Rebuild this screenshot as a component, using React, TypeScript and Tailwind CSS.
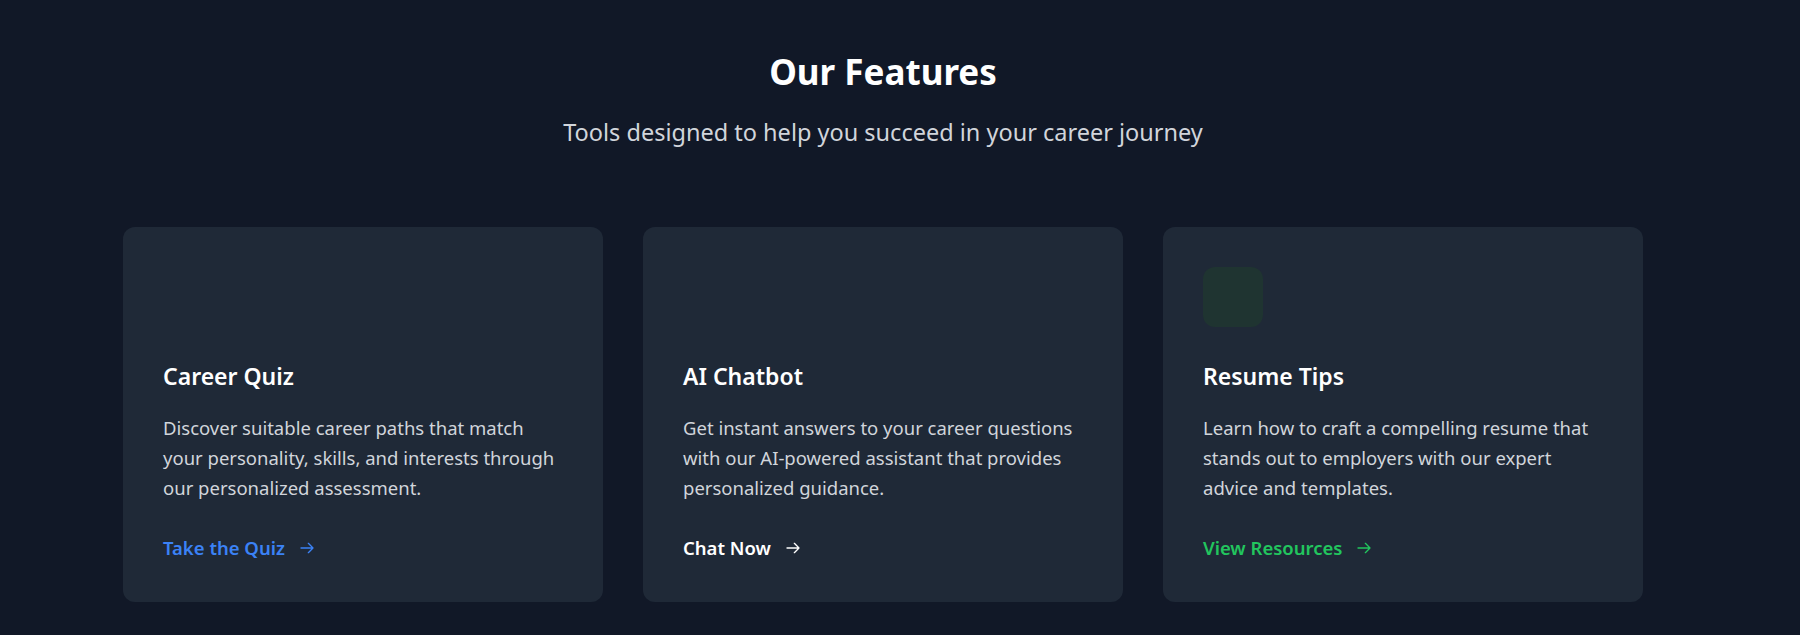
import { ReactNode } from "react";

type Feature = {
    title: string;
    text: string;
    link: string;
    linkClass: string;
    iconClass: string;
};

const features: Feature[] = [
    {
        title: "Career Quiz",
        text: "Discover suitable career paths that match your personality, skills, and interests through our personalized assessment.",
        link: "Take the Quiz",
        linkClass: "text-[#3b82f6]",
        iconClass: "bg-transparent",
    },
    {
        title: "AI Chatbot",
        text: "Get instant answers to your career questions with our AI-powered assistant that provides personalized guidance.",
        link: "Chat Now",
        linkClass: "text-white",
        iconClass: "bg-transparent",
    },
    {
        title: "Resume Tips",
        text: "Learn how to craft a compelling resume that stands out to employers with our expert advice and templates.",
        link: "View Resources",
        linkClass: "text-[#22c55e]",
        iconClass: "bg-[#1f3431]",
    },
];

function Arrow() {
    return (
        <svg
            viewBox="0 0 24 24"
            fill="none"
            stroke="currentColor"
            strokeWidth={2}
            strokeLinecap="round"
            strokeLinejoin="round"
            className="ml-3.5 h-4 w-4"
        >
            <path d="M14 5l7 7m0 0l-7 7m7-7H3" />
        </svg>
    );
}

function FeatureCard({ feature }: { feature: Feature }): ReactNode {
    return (
        <div className="flex flex-col rounded-xl bg-[#1f2937] p-10">
            {/* icon slot */}
            <div className={`h-[60px] w-[60px] rounded-xl ${feature.iconClass}`} />
            <h3 className="mt-[33px] text-[23px] font-semibold leading-8 text-white">{feature.title}</h3>
            <p className="mt-[21px] text-[18.5px] leading-[30px] text-[#d1d5db]">{feature.text}</p>
            <a href="#" className={`mt-[31px] inline-flex items-center text-[18.5px] font-semibold leading-7 ${feature.linkClass}`}>
                {feature.link}
                <Arrow />
            </a>
        </div>
    );
}

export default function App() {
    return (
        <div className="min-h-screen bg-[#111827] font-['Noto_Sans',sans-serif]">
            <section className="pl-[123px] pr-[157px] pb-[34px] pt-[52px]">
                <div className="text-center">
                    <h2 className="text-[35px] font-bold leading-10 text-white">Our Features</h2>
                    <p className="mt-[24px] text-[23.5px] leading-8 text-[#d1d5db]">
                        Tools designed to help you succeed in your career journey
                    </p>
                </div>

                <div className="mt-[79px] grid grid-cols-3 gap-10">
                    {features.map((f) => (
                        <FeatureCard key={f.title} feature={f} />
                    ))}
                </div>
            </section>
        </div>
    );
}
